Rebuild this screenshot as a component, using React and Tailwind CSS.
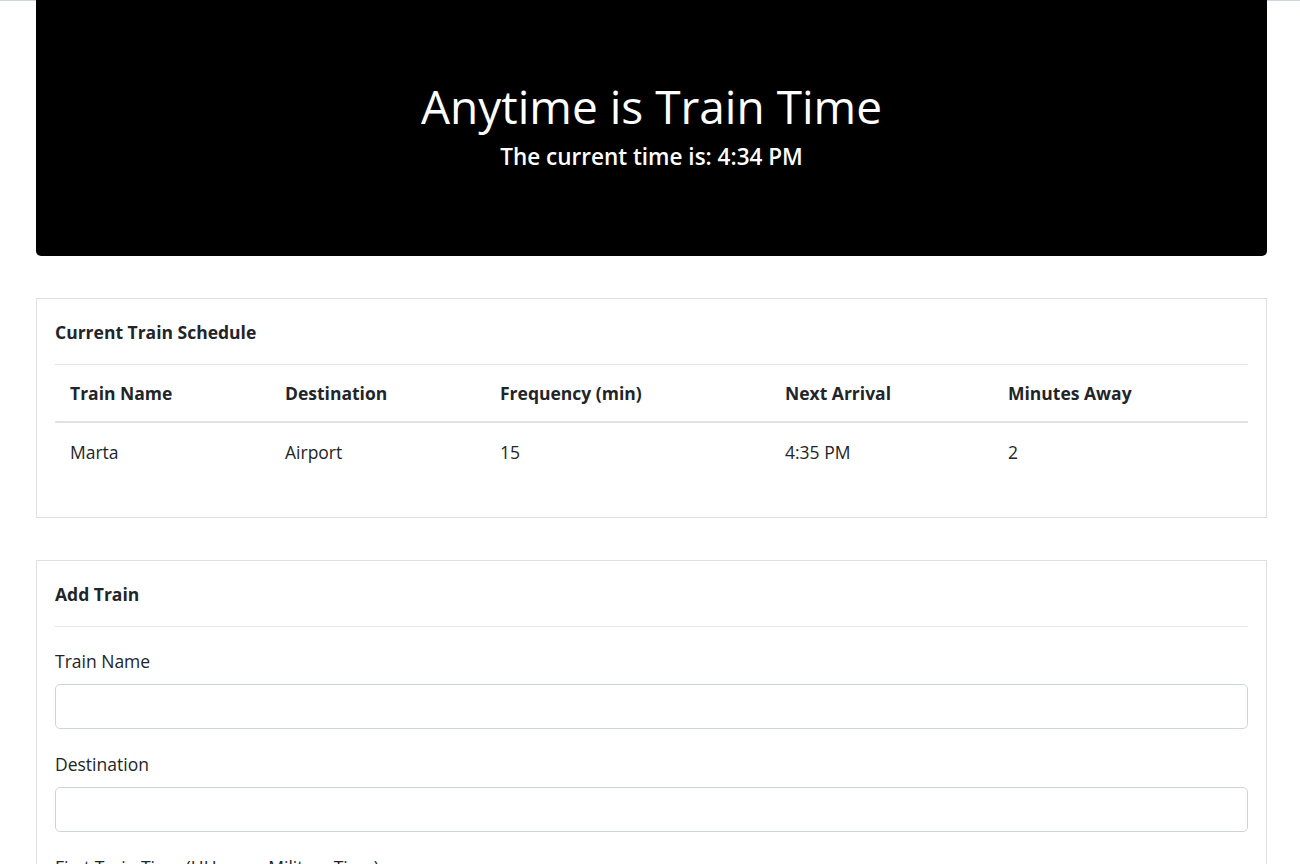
import React from 'react';

const trains = [
  { name: 'Marta', destination: 'Airport', frequency: '15', next: '4:35 PM', away: '2' },
];

const cols = [
  { label: 'Train Name', w: 'w-[215px]' },
  { label: 'Destination', w: 'w-[215px]' },
  { label: 'Frequency (min)', w: 'w-[285px]' },
  { label: 'Next Arrival', w: 'w-[223px]' },
  { label: 'Minutes Away', w: 'flex-1' },
];

const Field = ({ label }) => (
  <div className="mb-[22px]">
    <label className="block h-[27px] leading-[27px] mb-[9px]">{label}</label>
    <input
      type="text"
      className="block w-full h-[45px] px-3 rounded-[5px] border border-[#ced4da] bg-white outline-none"
    />
  </div>
);

export default function App() {
  return (
    <div
      className="min-h-screen bg-white text-[#212529] text-[17.5px] border-t border-[#cdd6e0]"
      style={{ fontFamily: '"Open Sans", "Noto Sans", sans-serif' }}
    >
      <div className="ml-[36px] w-[1231px] -mt-px">
        {/* header */}
        <div className="h-[256px] bg-black rounded-b-[5px] flex flex-col items-center justify-center text-white pb-[7px]">
          <h1 className="text-[46px] leading-[58px] font-medium mb-[7px]">Anytime is Train Time</h1>
          <h4 className="text-[22.5px] leading-[30px] font-semibold">The current time is: 4:34 PM</h4>
        </div>

        {/* schedule */}
        <div className="mt-[42px] border border-[#dfdfdf] px-[18px] pt-[20px] pb-[36px]">
          <div className="h-[27px] leading-[27px] font-bold">Current Train Schedule</div>
          <div className="mt-[18px] border-t border-[#e6e6e6]" />
          <div className="flex h-[58px] items-center border-b-2 border-[#dee2e6] font-bold">
            {cols.map((c) => (
              <div key={c.label} className={`${c.w} px-[15px]`}>
                {c.label}
              </div>
            ))}
          </div>
          {trains.map((t) => (
            <div key={t.name} className="flex h-[58px] items-center">
              <div className="w-[215px] px-[15px]">{t.name}</div>
              <div className="w-[215px] px-[15px]">{t.destination}</div>
              <div className="w-[285px] px-[15px]">{t.frequency}</div>
              <div className="w-[223px] px-[15px]">{t.next}</div>
              <div className="flex-1 px-[15px]">{t.away}</div>
            </div>
          ))}
        </div>

        {/* add train */}
        <div className="mt-[42px] border border-[#dfdfdf] px-[18px] pt-[20px] pb-[20px]">
          <div className="h-[27px] leading-[27px] font-bold">Add Train</div>
          <div className="mt-[18px] mb-[21px] border-t border-[#e6e6e6]" />
          <Field label="Train Name" />
          <Field label="Destination" />
          <Field label="First Train Time (HH:mm - Military Time)" />
          <Field label="Frequency (min)" />
        </div>
      </div>
    </div>
  );
}
